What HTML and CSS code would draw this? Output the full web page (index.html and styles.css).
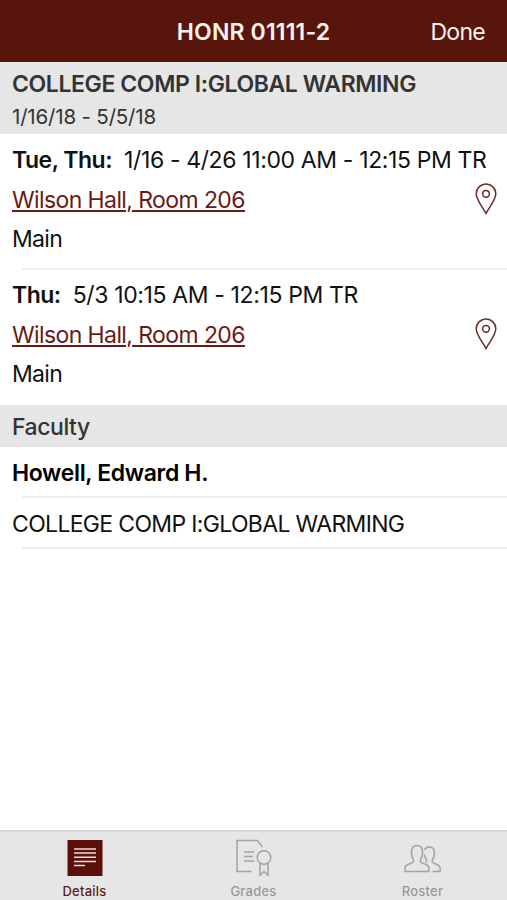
FILE: index.html
```html
<!DOCTYPE html>
<html lang="en">
<head>
    <meta charset="UTF-8">
    <meta name="viewport" content="width=device-width, initial-scale=1.0">
    <title>HONR 01111-2</title>
    <link rel="stylesheet" href="styles.css">
</head>
<body>
    <header class="navbar">
        <h1 class="navbar-title">HONR 01111-2</h1>
        <a class="navbar-done" href="#">Done</a>
    </header>

    <main class="content">
        <section class="course-header">
            <h2 class="course-title">COLLEGE COMP I:GLOBAL WARMING</h2>
            <p class="course-dates">1/16/18 - 5/5/18</p>
        </section>

        <section class="meeting">
            <p class="meeting-time"><strong class="days">Tue, Thu:</strong><span>1/16 - 4/26 11:00 AM - 12:15 PM TR</span></p>
            <div class="meeting-place">
                <a class="room" href="#">Wilson Hall, Room 206</a>
                <svg class="pin" viewBox="0 0 22 32" aria-hidden="true">
                    <path d="M11 30.5C8 24.500 1.200 17 1.200 10.800a9.800 9.800 0 0 1 19.600 0C20.800 17 14 24.500 11 30.500Z"/>
                    <circle cx="11" cy="10.800" r="3.400"/>
                </svg>
            </div>
            <p class="campus">Main</p>
        </section>

        <section class="meeting meeting-last">
            <p class="meeting-time"><strong class="days">Thu:</strong><span>5/3 10:15 AM - 12:15 PM TR</span></p>
            <div class="meeting-place">
                <a class="room" href="#">Wilson Hall, Room 206</a>
                <svg class="pin" viewBox="0 0 22 32" aria-hidden="true">
                    <path d="M11 30.500C8 24.500 1.200 17 1.200 10.800a9.800 9.800 0 0 1 19.600 0C20.800 17 14 24.500 11 30.500Z"/>
                    <circle cx="11" cy="10.800" r="3.400"/>
                </svg>
            </div>
            <p class="campus">Main</p>
        </section>

        <h2 class="section-header">Faculty</h2>
        <p class="row row-name">Howell, Edward H.</p>
        <p class="row row-course">COLLEGE COMP I:GLOBAL WARMING</p>
    </main>

    <nav class="tabbar">
        <a class="tab active" href="#">
            <svg class="tab-icon" viewBox="0 0 36 36" aria-hidden="true">
                <rect class="note" x="0.5" y="0" width="35" height="36"/>
                <path class="note-lines" d="M7 9h22M7 13h22M7 17.200h22M7 21.400h22M7 25.600h11"/>
            </svg>
            <span>Details</span>
        </a>
        <a class="tab" href="#">
            <svg class="tab-icon" viewBox="0 0 36 36" aria-hidden="true">
                <path d="M15.500 31.500H1V.5h20.500l5 6.500M8 12h10M8 16.500h9M8 21h10"/>
                <circle cx="28" cy="17.500" r="6.800"/>
                <path d="M24 23v12l4-3.500 4 3.500V23"/>
            </svg>
            <span>Grades</span>
        </a>
        <a class="tab" href="#">
            <svg class="tab-icon" viewBox="0 0 36 36" aria-hidden="true">
                <path d="M0 31.500v-3c0-3 2-3.700 5-4.800 3-1 4-1.500 3.500-4C6.500 17 6.300 13.500 6.500 11c.3-3.500 2.500-5.500 5.500-5.500s5.200 2 5.500 5.500c.2 2.500 0 6-2 8.700-.5 2.500.5 3 3.500 4 3 1.100 5 1.800 5 4.800v3Z"/>
                <path d="M19.500 10c.8-2 2.500-3 4.700-3 3 0 5 2 5.200 5.200.2 2.800-.5 5.800-2 7.800-.5 2.500.5 3 3.300 4 3 1 4.500 2 4.500 4.800v2.700H27.500M19.500 14.500c.2 2 1 4 2 5.300.3 1.200.1 2-.5 2.700"/>
            </svg>
            <span>Roster</span>
        </a>
    </nav>
</body>
</html>
```

FILE: styles.css
```css
:root {
    --maroon: #58150c;
    --grey-bg: #e6e6e6;
    --line: #ededed;
    --inactive: #a3a3a3;
}

* {
    margin: 0;
    padding: 0;
    box-sizing: border-box;
}

body {
    display: flex;
    flex-direction: column;
    height: 100vh;
    overflow: hidden;
    font-family: Inter, "Liberation Sans", sans-serif;
    font-size: 23px;
    line-height: 39.5px;
    color: #111;
    background-color: white;
    white-space: nowrap;
}

a {
    text-decoration: none;
    color: inherit;
}

.navbar {
    display: grid;
    grid-template-columns: 1fr auto 1fr;
    align-items: center;
    height: 62px;
    padding: 3px 22px 0;
    background-color: var(--maroon);
    color: #fff3ee;
}

.navbar-title {
    grid-column: 2;
    font-size: 23px;
    font-weight: 600;
    letter-spacing: 0.15px;
}

.navbar-done {
    justify-self: end;
    letter-spacing: -0.7px;
}

.content {
    flex: 1;
}

.course-header {
    height: 72px;
    padding: 6px 12px 0;
    background-color: var(--grey-bg);
    color: #333;
}

.course-title {
    font-size: 23px;
    font-weight: 600;
    line-height: 33px;
    letter-spacing: -0.4px;
}

.course-dates {
    font-size: 20.5px;
    line-height: 32px;
    letter-spacing: -0.18px;
}

.meeting {
    position: relative;
    height: 136px;
    padding: 7px 10px 0 12px;
}

.meeting-last {
    height: 135px;
    padding-top: 6px;
}

.meeting::after,
.row::after {
    content: "";
    position: absolute;
    left: 22px;
    right: 0;
    bottom: 0;
    height: 2px;
    background-color: var(--line);
}

.meeting-last::after {
    display: none;
}

.meeting-time {
    display: flex;
    letter-spacing: -0.37px;
}

.days {
    font-weight: 600;
    letter-spacing: -0.5px;
    margin-right: 12px;
}

.meeting-place {
    display: flex;
    justify-content: space-between;
    align-items: center;
}

.room {
    color: #6a1a14;
    letter-spacing: -0.6px;
    text-decoration: underline;
    text-decoration-thickness: 1.5px;
    text-underline-offset: 2px;
}

.pin {
    width: 22px;
    height: 32px;
    margin-bottom: 2px;
    fill: none;
    stroke: #6d2a26;
    stroke-width: 1.5;
}

.campus {
    letter-spacing: -0.7px;
}

.section-header {
    height: 42px;
    padding: 0 12px;
    font-size: 23px;
    font-weight: 550;
    line-height: 44px;
    letter-spacing: -0.45px;
    background-color: var(--grey-bg);
    color: #333;
}

.row {
    position: relative;
    height: 51px;
    padding: 0 12px;
    line-height: 52px;
}

.row-name {
    font-weight: 600;
    color: #000;
    letter-spacing: -0.35px;
}

.row-course {
    letter-spacing: -0.67px;
}

.tabbar {
    display: grid;
    grid-template-columns: repeat(3, 1fr);
    height: 70px;
    border-top: 2px solid #d8d8d8;
    background-color: var(--grey-bg);
}

.tab {
    display: flex;
    flex-direction: column;
    align-items: center;
    padding-top: 8px;
    font-size: 13px;
    font-weight: 500;
    line-height: 16px;
    letter-spacing: 0.25px;
    color: #999;
}

.tab.active {
    color: #641a15;
}

.tab-icon {
    width: 36px;
    height: 36px;
    margin-bottom: 7px;
    overflow: visible;
    fill: none;
    stroke: var(--inactive);
    stroke-width: 1.5;
}

.tab-icon .note {
    fill: #5b110a;
    stroke: none;
}

.tab-icon .note-lines {
    stroke: #f0dcd9;
}
```
